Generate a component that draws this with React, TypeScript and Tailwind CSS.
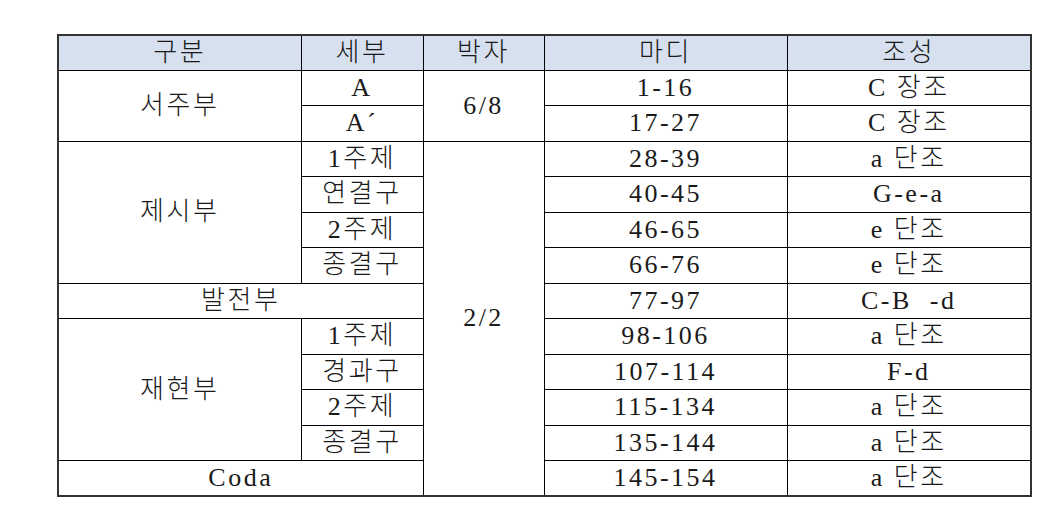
type Row = { sec?: { text: string; rows?: number; cols?: number }; sub?: string; beat?: { text: string; rows: number }; bars: string; key: string };

const rows: Row[] = [
  { sec: { text: "서주부", rows: 2 }, sub: "A", beat: { text: "6/8", rows: 2 }, bars: "1-16", key: "C 장조" },
  { sub: "A\u00b4", bars: "17-27", key: "C 장조" },
  { sec: { text: "제시부", rows: 4 }, sub: "1주제", beat: { text: "2/2", rows: 10 }, bars: "28-39", key: "a 단조" },
  { sub: "연결구", bars: "40-45", key: "G-e-a" },
  { sub: "2주제", bars: "46-65", key: "e 단조" },
  { sub: "종결구", bars: "66-76", key: "e 단조" },
  { sec: { text: "발전부", cols: 2 }, bars: "77-97", key: "C-B\u00a0 -d" },
  { sec: { text: "재현부", rows: 4 }, sub: "1주제", bars: "98-106", key: "a 단조" },
  { sub: "경과구", bars: "107-114", key: "F-d" },
  { sub: "2주제", bars: "115-134", key: "a 단조" },
  { sub: "종결구", bars: "135-144", key: "a 단조" },
  { sec: { text: "Coda", cols: 2 }, bars: "145-154", key: "a 단조" },
];

const cell = "border border-black p-0 text-center align-middle leading-none";

export default function App() {
  return (
    <div
      className="w-[1062px] h-[516px] bg-white pt-[34px] pl-[57px] text-[26px] font-light tracking-[2.5px] text-[#1a1a1a]"
      style={{ fontFamily: '"Liberation Serif", "Noto Sans CJK KR", serif' }}
    >
      <table className="border-collapse border-2 border-[#333] w-[973px] table-fixed">
        <colgroup>
          <col className="w-[243px]" />
          <col className="w-[122px]" />
          <col className="w-[121px]" />
          <col className="w-[243px]" />
          <col className="w-[244px]" />
        </colgroup>
        <thead>
          <tr className="h-[35px] bg-[#d6e0ee]">
            <th className={`${cell} font-light`}>구분</th>
            <th className={`${cell} font-light`}>세부</th>
            <th className={`${cell} font-light`}>박자</th>
            <th className={`${cell} font-light`}>마디</th>
            <th className={`${cell} font-light`}>조성</th>
          </tr>
        </thead>
        <tbody>
          {rows.map((r, i) => (
            <tr key={i} className="h-[35.5px]">
              {r.sec && (
                <td className={cell} rowSpan={r.sec.rows} colSpan={r.sec.cols}>
                  {r.sec.text}
                </td>
              )}
              {r.sub && <td className={cell}>{r.sub}</td>}
              {r.beat && (
                <td className={cell} rowSpan={r.beat.rows}>
                  {r.beat.text}
                </td>
              )}
              <td className={cell}>{r.bars}</td>
              <td className={cell}>{r.key}</td>
            </tr>
          ))}
        </tbody>
      </table>
    </div>
  );
}
